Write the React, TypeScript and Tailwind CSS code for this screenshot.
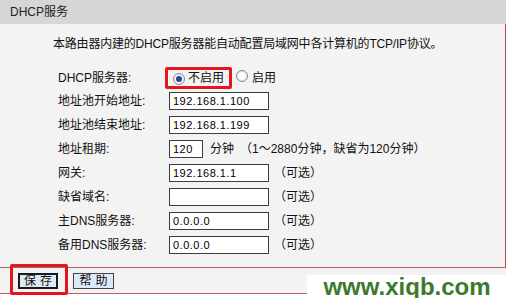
import React from 'react';

const font = { fontFamily: "'Liberation Sans', 'Noto Sans CJK SC', sans-serif" };

function Radio({ checked }: { checked?: boolean }) {
  return (
    <span className="inline-flex w-[12px] h-[12px] rounded-full border border-[#8a8a8a] bg-white items-center justify-center shadow-[inset_0_0_2px_#bbb]">
      {checked && <span className="w-[6px] h-[6px] rounded-full bg-[#1f4f8f]" />}
    </span>
  );
}

function Row({ label, children }: { label: string; children: React.ReactNode }) {
  return (
    <div className="flex items-center h-[24px]">
      <div className="w-[111px] shrink-0">{label}</div>
      {children}
    </div>
  );
}

function Field({ value, w = 'w-[100px]' }: { value: string; w?: string }) {
  return (
    <div className={`${w} h-[18px] border border-[#3c3c3c] bg-white px-[3px] text-[11px] leading-[16px] tracking-[0.5px] text-black`}>
      {value}
    </div>
  );
}

const Opt = () => <span className="ml-[5px]">（可选）</span>;

export default function App() {
  return (
    <div className="relative w-[509px] h-[298px] bg-white text-[12px] text-[#111] overflow-hidden" style={font}>
      {/* header */}
      <div className="w-[506px] h-[24px] bg-[#d6d6d6] flex items-center pl-[10px] text-[12px] text-[#222]">DHCP服务</div>

      {/* body */}
      <div className="w-[506px] bg-[#f3f3f3] border-r border-[#b04a4a] border-b border-b-[#b86060]">
        <div className="pl-[53px] pt-[11px] h-[42px] tracking-[-0.2px]">本路由器内建的DHCP服务器能自动配置局域网中各计算机的TCP/IP协议。</div>
        <div className="pl-[58px] pb-[10px]">
          <div className="flex items-center h-[23px]">
            <div className="w-[111px] shrink-0">DHCP服务器:</div>
            <span className="ml-[4px]"><Radio checked /></span>
            <span className="ml-[3px]">不启用</span>
            <span className="ml-[12px]"><Radio /></span>
            <span className="ml-[4px]">启用</span>
          </div>
          <Row label="地址池开始地址:"><Field value="192.168.1.100" /></Row>
          <Row label="地址池结束地址:"><Field value="192.168.1.199" /></Row>
          <Row label="地址租期:">
            <Field value="120" w="w-[34px]" />
            <span className="ml-[7px]">分钟</span>
            <span className="ml-[6px]">（1～2880分钟，缺省为120分钟）</span>
          </Row>
          <Row label="网关:"><Field value="192.168.1.1" /><Opt /></Row>
          <Row label="缺省域名:"><Field value="" /><Opt /></Row>
          <Row label="主DNS服务器:"><Field value="0.0.0.0" /><Opt /></Row>
          <Row label="备用DNS服务器:"><Field value="0.0.0.0" /><Opt /></Row>
        </div>
      </div>

      {/* buttons */}
      <div className="w-[506px] h-[26px] bg-[#f3f3f3] border-b border-[#b86060] flex items-center pl-[18px] gap-[15px]">
        <button className="w-[40px] h-[16px] bg-[#dce9f6] border-2 border-[#1a1a1a] text-[12px] leading-[12px] tracking-[4px] pl-[4px]">保存</button>
        <button className="w-[41px] h-[16px] bg-[#dce9f6] border border-[#444] text-[12px] leading-[12px] tracking-[4px] pl-[4px]">帮助</button>
      </div>

      {/* annotation boxes */}
      <div className="absolute left-[165px] top-[67px] w-[67px] h-[22px] border-[3px] border-[#e4151b] rounded-[2px]" />
      <div className="absolute left-[10px] top-[264px] w-[58px] h-[31px] border-[3px] border-[#e4151b] rounded-[2px]" />

      {/* watermark */}
      <div className="absolute left-[307px] top-[275px] w-[200px] h-[23px] bg-white flex items-center justify-center">
        <span className="text-[24px] font-bold text-[#3a7a2c] leading-none">www.xiqb.com</span>
      </div>
    </div>
  );
}
